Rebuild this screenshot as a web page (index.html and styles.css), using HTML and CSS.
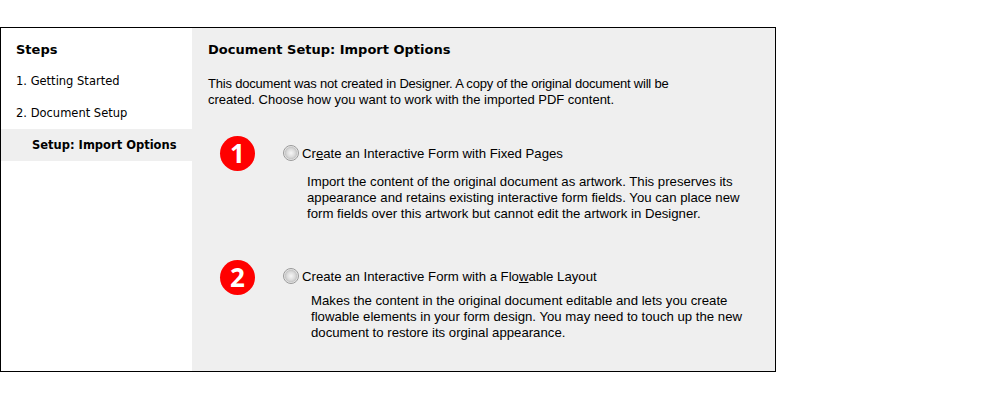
FILE: index.html
```html
<!DOCTYPE html>
<html lang="en">
<head>
    <meta charset="UTF-8">
    <title>Document Setup: Import Options</title>
    <link rel="stylesheet" href="styles.css">
</head>
<body>

<div class="frame">
    <div class="sidebar">
        <h2>Steps</h2>
        <div class="step">1. Getting Started</div>
        <div class="step">2. Document Setup</div>
        <div class="step current">Setup: Import Options</div>
    </div>

    <div class="content">
        <h1>Document Setup: Import Options</h1>
        <p class="intro"><span class="tight">This document was not created in Designer. A copy of the original document will be</span> created. Choose how you want to work with the imported PDF content.</p>

        <div class="option first">
            <div class="badge">1</div>
            <div class="option-body">
                <div class="option-title"><span class="radio"></span>Cr<u>e</u>ate an Interactive Form with Fixed Pages</div>
                <p class="desc">Import the content of the original document as artwork. This preserves its appearance and retains existing interactive form fields. You can place new form fields over this artwork but cannot edit the artwork in Designer.</p>
            </div>
        </div>

        <div class="option second">
            <div class="badge">2</div>
            <div class="option-body">
                <div class="option-title"><span class="radio"></span>Create an Interactive Form with a Flo<u>w</u>able Layout</div>
                <p class="desc">Makes the content in the original document editable and lets you create flowable elements in your form design. You may need to touch up the new document to restore its orginal appearance.</p>
            </div>
        </div>
    </div>
</div>

</body>
</html>
```

FILE: styles.css
```css
body {
    margin: 0;
    background-color: #fff;
    color: #000;
    font-family: "Liberation Sans", Arial, sans-serif;
    font-size: 13.2px;
}
.frame {
    display: flex;
    box-sizing: border-box;
    width: 776px;
    height: 345px;
    margin-top: 27px;
    border: 1px solid #000;
}
.sidebar {
    width: 191px;
    flex-shrink: 0;
    padding-top: 13px;
    font-family: "DejaVu Sans", Verdana, sans-serif;
}
.sidebar h2 {
    margin: 0 0 6px 15px;
    font-size: 13px;
    line-height: 18px;
}
.step {
    height: 32px;
    padding-left: 15px;
    font-size: 11.5px;
    line-height: 32px;
}
.step.current {
    padding-left: 31px;
    background-color: #efefef;
    font-weight: bold;
}
.content {
    flex: 1;
    padding: 13px 0 0 16px;
    background-color: #efefef;
}
.content h1 {
    margin: 0;
    font-family: "DejaVu Sans", Verdana, sans-serif;
    font-size: 13px;
    line-height: 18px;
}
.intro {
    width: 480px;
    margin: 17px 0 0;
    font-size: 13px;
    line-height: 16px;
}
.tight {
    letter-spacing: -0.2px;
}
.option {
    display: flex;
}
.option.first {
    margin-top: 28px;
}
.option.second {
    margin-top: 38px;
}
.badge {
    width: 35px;
    height: 35px;
    margin-left: 12px;
    border-radius: 50%;
    background-color: #f00;
    color: #fff;
    font-family: "Open Sans", sans-serif;
    font-size: 26px;
    font-weight: bold;
    line-height: 35px;
    text-align: center;
}
.option-body {
    margin-left: 28px;
}
.option-title {
    display: flex;
    align-items: center;
    height: 18px;
    margin-top: 8px;
}
.second .option-title {
    margin-top: 7px;
}
.radio {
    box-sizing: border-box;
    width: 16px;
    height: 16px;
    margin-right: 3px;
    border: 1px solid #9a9a9a;
    border-radius: 50%;
    background: radial-gradient(circle at 50% 50%, #f6f6f6 0, #dcdcdc 40%, #c8c8c8 58%, #f4f4f4 72%);
}
.desc {
    width: 450px;
    margin: 12px 0 0 24px;
    line-height: 16px;
}
.second .desc {
    width: 440px;
    margin: 8px 0 0 28px;
}
```
